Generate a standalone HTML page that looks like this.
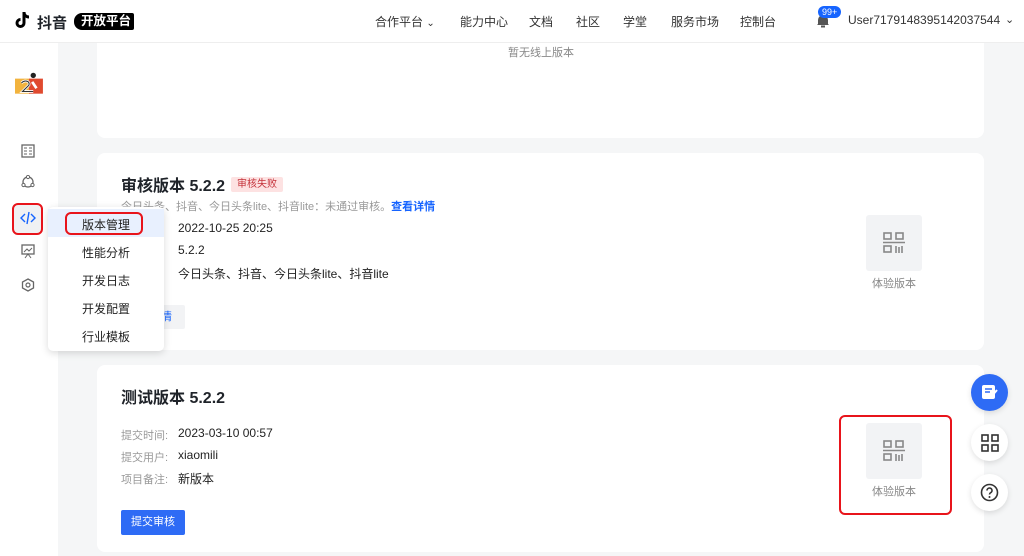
<!DOCTYPE html>
<html><head><meta charset="utf-8"><style>
*{margin:0;padding:0;box-sizing:border-box}
body{width:1024px;height:556px;overflow:hidden;background:#f5f6f7;font-family:"Liberation Sans","Noto Sans CJK SC",sans-serif;position:relative;color:#1f2329}
.hdr{position:absolute;left:0;top:0;width:1024px;height:43px;background:#fff;border-bottom:1px solid #eee;z-index:5}
.nav{position:absolute;top:13px;font-size:12px;color:#333}
.side{position:absolute;left:0;top:43px;width:58px;height:513px;background:#fff}
.card{position:absolute;left:97px;width:887px;background:#fff;border-radius:8px}
.t{position:absolute;font-size:11px;color:#999}
.v{position:absolute;font-size:12px;color:#222}
.qr{position:absolute;width:56px;height:56px;background:#f2f3f5;border-radius:3px}
.menu{position:absolute;left:48px;top:207px;width:116px;height:144px;background:#fff;border-radius:5px;box-shadow:0 2px 8px rgba(0,0,0,.15);z-index:6}
.mi{position:absolute;left:34px;font-size:12px;color:#222}
.fb{position:absolute;left:971px;width:37px;height:37px;border-radius:50%;background:#fff;box-shadow:0 2px 6px rgba(0,0,0,.12)}
</style></head><body>
<div class="hdr">
<svg style="position:absolute;left:15px;top:11px" width="16" height="19" viewBox="0 0 16 19"><path d="M9 1v11a3.5 3.5 0 1 1-3.5-3.5" stroke="#000" stroke-width="3" fill="none"/><path d="M9 1c0 3 2 5 5 5" stroke="#000" stroke-width="3" fill="none"/></svg>
<div style="position:absolute;left:37px;top:12px;font-size:15px;font-weight:bold">抖音</div>
<div style="position:absolute;left:74px;top:13px;height:17px;padding:0 3px 0 7px;background:#000;color:#fff;font-size:12.5px;font-weight:bold;line-height:17px;border-radius:8px 2px 2px 8px">开放平台</div>
<div class="nav" style="left:375px">合作平台 <span style="font-size:10px">⌄</span></div>
<div class="nav" style="left:460px">能力中心</div>
<div class="nav" style="left:529px">文档</div>
<div class="nav" style="left:576px">社区</div>
<div class="nav" style="left:623px">学堂</div>
<div class="nav" style="left:671px">服务市场</div>
<div class="nav" style="left:740px">控制台</div>
<svg style="position:absolute;left:816px;top:13px" width="14" height="15" viewBox="0 0 14 15"><path d="M2 11V7a5 5 0 0 1 10 0v4l1 1H1z" fill="#555"/><rect x="5" y="12.5" width="4" height="2" fill="#555"/></svg>
<div style="position:absolute;left:818px;top:6px;background:#1664ff;color:#fff;font-size:9px;padding:0 4px;border-radius:7px;line-height:12px">99+</div>
<div class="nav" style="left:848px;color:#333">User7179148395142037544</div>
<div class="nav" style="left:1005px;font-size:11px">⌄</div>
</div>
<div class="side">
<svg style="position:absolute;left:15px;top:29px" width="29" height="24" viewBox="0 0 27 22"><rect x="0" y="6" width="14" height="14" fill="#f2b33d"/><rect x="13" y="6" width="13" height="14" fill="#e04a2f"/><circle cx="17" cy="3" r="2.5" fill="#222"/><path d="M6 10c3-3 8-2 7 2l-6 6h10M16 9l4 6" stroke="#fff" stroke-width="2.5" fill="none"/><path d="M6 10c3-3 8-2 7 2l-6 6h10" stroke="#333" stroke-width="1" fill="none"/></svg>
<svg style="position:absolute;left:21px;top:101px" width="14" height="14"><rect x="1" y="1" width="12" height="12" fill="none" stroke="#666" stroke-width="1.3"/><path d="M3 4h3M3 7h3M3 10h3M8 4h3M8 7h3M8 10h3" stroke="#666"/></svg>
<svg style="position:absolute;left:21px;top:132px" width="14" height="14"><circle cx="7" cy="7" r="5" fill="none" stroke="#666" stroke-width="1.3"/><circle cx="7" cy="2" r="1.6" fill="#fff" stroke="#666"/><circle cx="2.5" cy="10" r="1.6" fill="#fff" stroke="#666"/><circle cx="11.5" cy="10" r="1.6" fill="#fff" stroke="#666"/></svg>
<div style="position:absolute;left:12px;top:160px;width:31px;height:32px;border:2px solid #e8141b;border-radius:6px;background:#f0f1f3"></div>
<svg style="position:absolute;left:20px;top:168px" width="16" height="14"><path d="M5 3L1 7l4 4M11 3l4 4-4 4M9 1L7 13" stroke="#1664ff" stroke-width="1.4" fill="none"/></svg>
<svg style="position:absolute;left:21px;top:201px" width="14" height="15"><rect x="1" y="1" width="12" height="9" fill="none" stroke="#666" stroke-width="1.3"/><path d="M3 8l3-3 2 2 3-3M4 14l3-4 3 4" stroke="#666" fill="none"/></svg>
<svg style="position:absolute;left:21px;top:235px" width="14" height="14"><path d="M7 1l5.5 3v6L7 13 1.5 10V4z" fill="none" stroke="#666" stroke-width="1.3"/><circle cx="7" cy="7" r="2" fill="none" stroke="#666" stroke-width="1.2"/></svg>
</div>
<div class="card" style="top:30px;height:108px;border-radius:0 0 8px 8px"><div class="t" style="left:411px;top:14px;color:#888">暂无线上版本</div></div>
<div class="card" style="top:153px;height:197px">
<div style="position:absolute;left:24px;top:19px;font-size:16px;font-weight:bold">审核版本 5.2.2</div>
<div style="position:absolute;left:134px;top:24px;background:#fde2e2;color:#c4323a;font-size:10px;padding:0 6px;line-height:15px;border-radius:2px">审核失败</div>
<div class="t" style="left:24px;top:45px;color:#999">今日头条、抖音、今日头条lite、抖音lite：未通过审核。<b style="color:#1664ff">查看详情</b></div>
<div class="v" style="left:81px;top:68px">2022-10-25 20:25</div>
<div class="v" style="left:81px;top:90px">5.2.2</div>
<div class="v" style="left:81px;top:112px">今日头条、抖音、今日头条lite、抖音lite</div>
<div style="position:absolute;left:24px;top:152px;width:64px;height:24px;background:#f2f3f5;border-radius:2px;font-size:11px;color:#1664ff;line-height:24px;padding-left:40px">情</div>
<div class="qr" style="left:769px;top:62px"></div>
<svg style="position:absolute;left:786px;top:79px" width="22" height="22" viewBox="0 0 22 22"><g stroke="#888" stroke-width="1.6" fill="none"><rect x="1" y="1" width="7" height="6"/><rect x="13" y="1" width="7" height="6"/><rect x="1" y="14" width="7" height="6"/><path d="M0 10.5h22M13 14v7M16 15v6M19 14v7"/></g></svg>
<div class="t" style="left:775px;top:122px;color:#888">体验版本</div>
</div>
<div class="card" style="top:365px;height:187px">
<div style="position:absolute;left:24px;top:19px;font-size:16px;font-weight:bold">测试版本 5.2.2</div>
<div class="t" style="left:24px;top:62px">提交时间:</div><div class="v" style="left:81px;top:61px">2023-03-10 00:57</div>
<div class="t" style="left:24px;top:84px">提交用户:</div><div class="v" style="left:81px;top:83px">xiaomili</div>
<div class="t" style="left:24px;top:106px">项目备注:</div><div class="v" style="left:81px;top:105px">新版本</div>
<div style="position:absolute;left:24px;top:145px;width:64px;height:25px;background:#2e6bf5;color:#fff;font-size:11px;line-height:25px;text-align:center;border-radius:2px">提交审核</div>
<div style="position:absolute;left:742px;top:50px;width:113px;height:100px;border:2px solid #e8141b;border-radius:6px"></div>
<div class="qr" style="left:769px;top:58px"></div>
<svg style="position:absolute;left:786px;top:75px" width="22" height="22" viewBox="0 0 22 22"><g stroke="#888" stroke-width="1.6" fill="none"><rect x="1" y="1" width="7" height="6"/><rect x="13" y="1" width="7" height="6"/><rect x="1" y="14" width="7" height="6"/><path d="M0 10.5h22M13 14v7M16 15v6M19 14v7"/></g></svg>
<div class="t" style="left:775px;top:118px;color:#888">体验版本</div>
</div>
<div class="menu">
<div style="position:absolute;left:0;top:2px;width:116px;height:28px;background:#e8f0fe"></div>
<div style="position:absolute;left:17px;top:5px;width:78px;height:23px;border:2px solid #e8141b;border-radius:6px"></div>
<div class="mi" style="top:9px">版本管理</div>
<div class="mi" style="top:37px">性能分析</div>
<div class="mi" style="top:65px">开发日志</div>
<div class="mi" style="top:93px">开发配置</div>
<div class="mi" style="top:121px">行业模板</div>
</div>
<div class="fb" style="top:374px;background:#2e6bf5"><svg style="position:absolute;left:10px;top:10px" width="18" height="17"><rect x="1" y="1" width="13" height="14" rx="2" fill="#fff"/><path d="M4 5h7M4 8h5" stroke="#2e6bf5" stroke-width="1.6"/><path d="M10 13l6-7" stroke="#fff" stroke-width="2"/></svg></div>
<div class="fb" style="top:424px"><svg style="position:absolute;left:10px;top:10px" width="18" height="18"><g stroke="#333" stroke-width="1.6" fill="none"><rect x="1" y="1" width="6" height="6"/><rect x="11" y="1" width="6" height="6"/><rect x="1" y="11" width="6" height="6"/><rect x="11" y="11" width="6" height="6"/></g></svg></div>
<div class="fb" style="top:474px"><svg style="position:absolute;left:9px;top:9px" width="19" height="19"><circle cx="9.5" cy="9.5" r="8" fill="none" stroke="#333" stroke-width="1.6"/><path d="M7 7.5a2.5 2.5 0 1 1 3.5 2.3c-.7.4-1 .8-1 1.7" stroke="#333" stroke-width="1.6" fill="none"/><circle cx="9.5" cy="14" r="1" fill="#333"/></svg></div>
</body></html>
